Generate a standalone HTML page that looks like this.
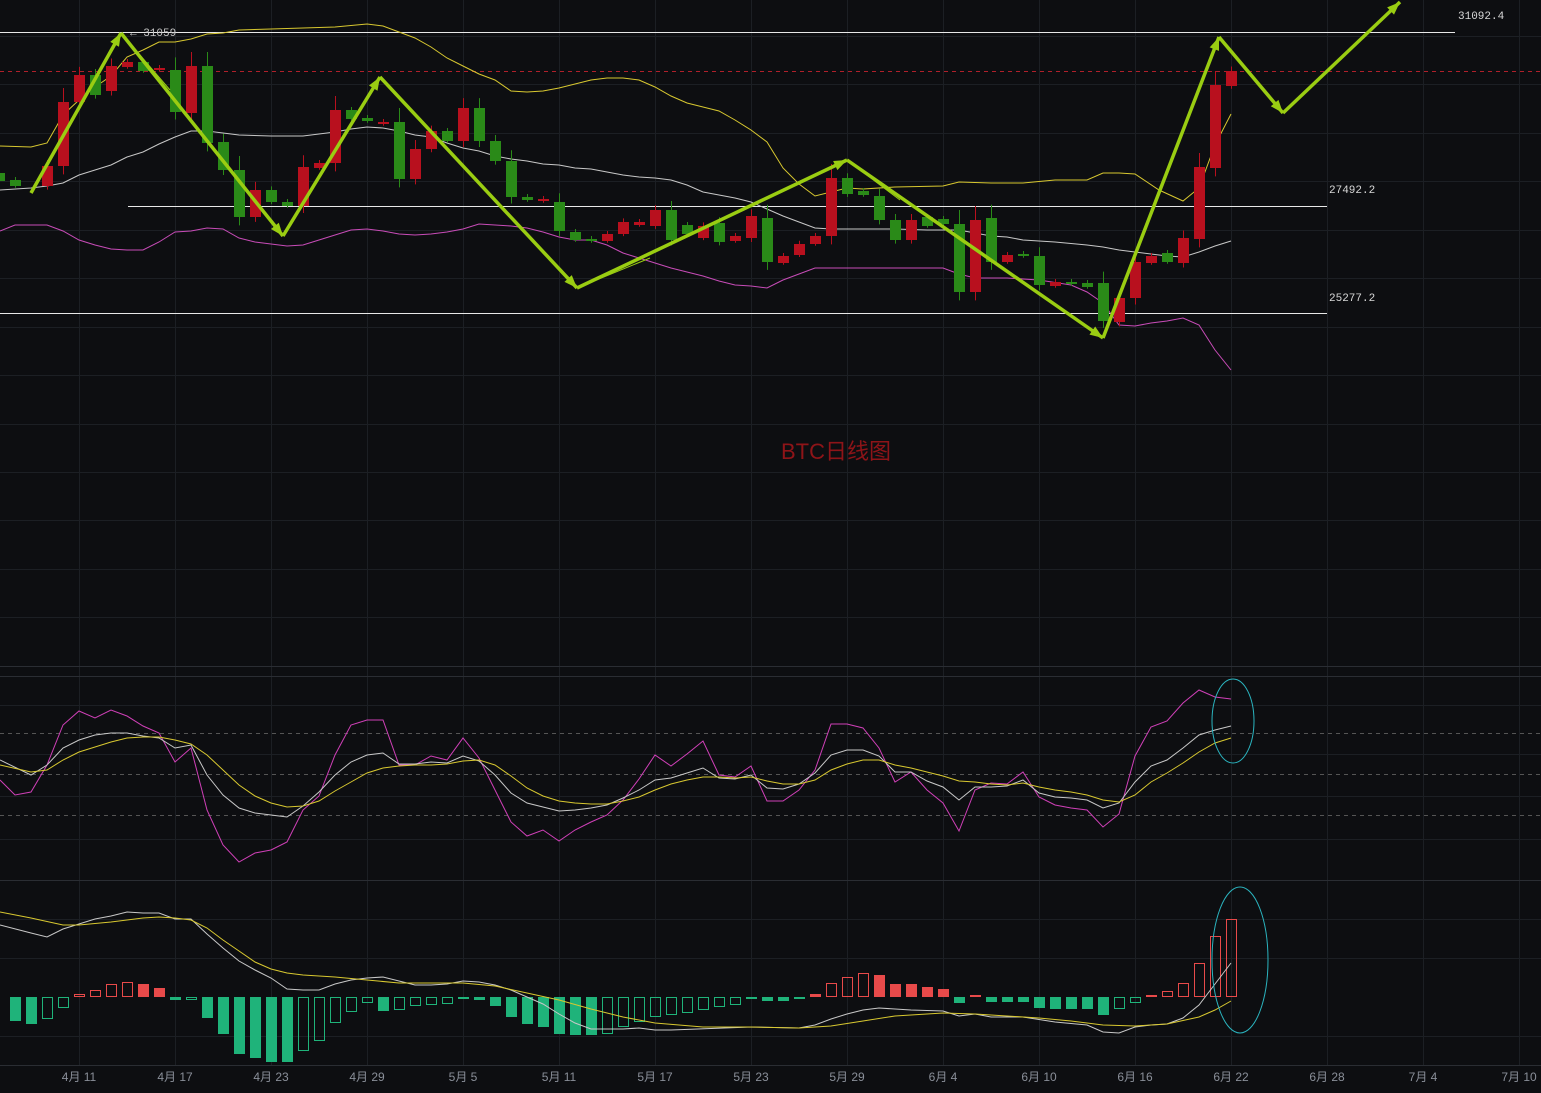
<!DOCTYPE html>
<html><head><meta charset="utf-8"><style>
html,body{margin:0;padding:0;background:#0d0e11;width:1541px;height:1093px;overflow:hidden}
svg{display:block}
.lbl{font-family:"Liberation Mono",monospace;font-size:11px;fill:#d8d8d8}
.ax{font-family:"Liberation Sans","Noto Sans CJK SC",sans-serif;font-size:12px;fill:#8a8f99}
</style></head><body>
<svg id="s" width="1541" height="1093" viewBox="0 0 1541 1093" xmlns="http://www.w3.org/2000/svg">
<rect width="1541" height="1093" fill="#0d0e11"/>
<g id="grid" stroke="#1c1f24" stroke-width="1"></g>
<line x1="0" y1="666.5" x2="1541" y2="666.5" stroke="#2a2d33"/>
<line x1="0" y1="676.5" x2="1541" y2="676.5" stroke="#2a2d33"/>
<line x1="0" y1="880.5" x2="1541" y2="880.5" stroke="#2a2d33"/>
<line x1="0" y1="1065.5" x2="1541" y2="1065.5" stroke="#2a2d33"/>
<!-- horizontal levels -->
<line x1="0" y1="32.5" x2="1455" y2="32.5" stroke="#e8e8e8"/>
<line x1="128" y1="206.5" x2="1327" y2="206.5" stroke="#e8e8e8"/>
<line x1="0" y1="313.5" x2="1327" y2="313.5" stroke="#e8e8e8"/>
<line x1="0" y1="71.5" x2="1541" y2="71.5" stroke="#b0202a" stroke-dasharray="4,4"/>
<text class="lbl" x="1458" y="19">31092.4</text>
<text class="lbl" x="1329" y="193">27492.2</text>
<text class="lbl" x="1329" y="301">25277.2</text>
<text class="lbl" x="130" y="36" style="fill:#c8c8c8">← 31059</text>
<!-- bollinger -->
<polyline fill="none" stroke="#d8c830" stroke-width="1" points="0,146 31,147 47,143 63,115 79,100 95,87 111,76 127,57 143,50 159,42 175,42 191,39 207,34 223,33 239,30 271,29 303,28 335,27 367,24 383,26 399,32 415,38 431,47 447,58 463,66 479,74 495,80 511,91 527,92 543,91 559,88 575,84 591,80 607,78 623,78 639,80 655,87 671,96 687,103 703,107 719,111 735,120 751,130 767,142 783,168 799,184 815,196 831,192 847,188 863,189 895,187 943,186 959,182 991,183 1023,183 1055,180 1087,180 1103,173 1119,173 1135,174 1159,190 1183,201 1199,188 1215,145 1231,114"/>
<polyline fill="none" stroke="#c8c8c8" stroke-width="1" points="0,190 31,188 47,186 63,183 79,175 95,170 111,165 127,157 143,152 159,144 175,137 191,131 207,131 223,133 239,135 271,136 303,136 335,132 351,129 367,127 383,128 399,131 415,135 431,137 447,143 463,148 479,151 495,156 511,159 527,161 543,164 559,165 575,168 591,169 607,172 623,175 639,177 655,178 671,180 687,185 703,192 719,195 735,198 751,202 767,209 783,216 799,222 815,228 831,229 863,229 895,229 927,230 959,230 975,233 991,236 1007,237 1023,240 1055,242 1087,245 1103,247 1119,250 1135,252 1151,254 1167,256 1183,257 1199,252 1215,246 1231,241"/>
<polyline fill="none" stroke="#c84cb8" stroke-width="1" points="0,231 15,225 31,225 47,225 63,231 79,240 95,245 111,249 127,250 143,250 159,242 175,232 191,231 207,228 223,229 239,238 255,242 271,244 287,246 303,245 319,240 335,235 351,230 367,229 383,231 399,234 415,235 431,234 447,232 463,229 479,224 495,225 511,226 527,228 543,232 559,237 575,240 591,240 607,245 623,253 639,258 655,263 671,268 687,272 703,276 719,281 735,285 751,286 767,288 783,280 799,274 815,268 831,268 895,268 943,268 959,274 975,278 1007,278 1039,280 1071,285 1087,292 1103,303 1119,325 1135,326 1151,323 1167,321 1183,318 1199,325 1215,350 1231,370"/>
<g id="candles"></g>
<g id="arrows"></g>
<text x="781" y="459" font-family="'Liberation Sans','Noto Sans CJK SC',sans-serif" font-size="22" fill="#8e1418">BTC日线图</text>
<!-- RSI -->
<line x1="0" y1="733.5" x2="1541" y2="733.5" stroke="#555" stroke-dasharray="4,4"/>
<line x1="0" y1="774.5" x2="1541" y2="774.5" stroke="#555" stroke-dasharray="4,4"/>
<line x1="0" y1="815.5" x2="1541" y2="815.5" stroke="#555" stroke-dasharray="4,4"/>
<polyline fill="none" stroke="#d040b8" stroke-width="1" points="0,780 15,795 31,792 47,765 63,725 79,711 95,718 111,710 127,716 143,726 159,733 175,762 191,748 207,810 223,845 239,862 255,853 271,850 287,842 303,810 319,796 335,755 351,725 367,720 383,720 399,765 415,765 431,756 447,760 463,738 479,758 495,790 511,822 527,836 543,830 559,841 575,830 591,822 607,815 623,800 639,779 655,755 671,766 687,754 703,741 719,775 735,777 751,766 767,801 783,801 799,790 815,770 831,724 847,724 863,728 879,748 895,782 911,772 927,790 943,803 959,831 975,790 991,783 1007,784 1023,772 1039,797 1055,805 1071,808 1087,810 1103,827 1119,814 1135,756 1151,727 1167,721 1183,703 1199,690 1215,697 1231,699"/>
<polyline fill="none" stroke="#c8c8c8" stroke-width="1" points="0,760 31,775 47,765 63,748 79,740 95,735 111,733 127,733 143,736 159,738 175,748 191,745 207,775 223,795 239,808 255,813 271,815 287,817 303,806 319,792 335,775 351,762 367,755 383,753 399,764 415,764 431,762 447,763 463,756 479,761 495,775 511,793 527,803 543,807 559,811 575,810 591,808 607,805 623,798 639,790 655,780 671,778 687,773 703,768 719,778 735,779 751,775 767,788 783,789 799,784 815,773 831,755 847,750 863,750 879,756 895,772 911,772 927,781 943,787 959,800 975,787 991,787 1007,786 1023,780 1039,793 1055,797 1071,798 1087,800 1103,808 1119,803 1135,782 1151,766 1167,760 1183,748 1199,735 1215,730 1231,726"/>
<polyline fill="none" stroke="#d8c830" stroke-width="1" points="0,765 31,772 47,770 63,760 79,752 95,747 111,742 127,738 143,737 159,737 175,740 191,744 207,755 223,770 239,785 255,796 271,803 287,807 303,806 319,801 335,791 351,782 367,773 383,768 399,766 415,765 431,765 447,764 463,761 479,760 495,765 511,776 527,788 543,796 559,801 575,803 591,804 607,804 623,801 639,797 655,790 671,784 687,780 703,777 719,777 735,778 751,777 767,781 783,784 799,784 815,780 831,770 847,764 863,760 879,760 895,765 911,768 927,772 943,776 959,781 975,782 991,784 1007,785 1023,783 1039,787 1055,790 1071,792 1087,795 1103,800 1119,802 1135,795 1151,782 1167,773 1183,763 1199,752 1215,743 1231,738"/>
<ellipse cx="1233" cy="721" rx="21" ry="42" fill="none" stroke="#2bb5c0" stroke-width="1"/>
<!-- MACD -->
<g id="hist"></g>
<polyline fill="none" stroke="#c8c8c8" stroke-width="1" points="0,925 31,933 47,937 63,929 79,924 95,919 111,916 127,912 143,913 159,913 175,919 191,919 207,934 223,948 239,961 255,970 271,978 287,989 303,990 319,990 335,984 351,980 367,978 383,977 399,981 415,985 431,985 447,984 463,981 479,982 495,985 511,990 527,997 543,1004 559,1014 575,1023 591,1029 607,1029 623,1029 639,1028 655,1030 671,1030 751,1027 799,1028 815,1025 831,1019 847,1014 863,1010 879,1008 911,1010 943,1011 959,1016 975,1014 991,1017 1023,1017 1055,1022 1087,1025 1103,1032 1119,1033 1135,1027 1151,1025 1167,1024 1183,1018 1199,1005 1215,984 1231,963"/>
<polyline fill="none" stroke="#d8c830" stroke-width="1" points="0,912 31,918 63,925 79,925 111,922 143,918 159,917 175,918 191,920 207,928 223,940 239,951 255,962 271,969 287,973 303,975 335,977 367,980 399,983 431,983 463,983 495,986 527,993 559,1000 591,1009 623,1017 655,1023 703,1027 751,1027 799,1028 831,1026 863,1021 895,1016 943,1013 975,1014 1007,1016 1039,1018 1071,1021 1103,1025 1135,1026 1167,1024 1199,1017 1215,1010 1231,1001"/>
<ellipse cx="1240" cy="960" rx="28" ry="73" fill="none" stroke="#2bb5c0" stroke-width="1"/>
<!-- axis -->
<g class="ax" text-anchor="middle">
<text x="79" y="1081">4月 11</text><text x="175" y="1081">4月 17</text><text x="271" y="1081">4月 23</text><text x="367" y="1081">4月 29</text><text x="463" y="1081">5月 5</text><text x="559" y="1081">5月 11</text><text x="655" y="1081">5月 17</text><text x="751" y="1081">5月 23</text><text x="847" y="1081">5月 29</text><text x="943" y="1081">6月 4</text><text x="1039" y="1081">6月 10</text><text x="1135" y="1081">6月 16</text><text x="1231" y="1081">6月 22</text><text x="1327" y="1081">6月 28</text><text x="1423" y="1081">7月 4</text><text x="1519" y="1081">7月 10</text>
</g>
</svg>
<script>
var NS="http://www.w3.org/2000/svg";
function el(p,t,a){var e=document.createElementNS(NS,t);for(var k in a)e.setAttribute(k,a[k]);p.appendChild(e);return e;}
var g=document.getElementById('grid');
for(var x=-17;x<1541;x+=96)el(g,'line',{x1:x+.5,y1:0,x2:x+.5,y2:1065});
[36,84,133,181,230,278,327,375,424,472,520,569,617,705,754,796,839,919,958,1036].forEach(function(y){el(g,'line',{x1:0,y1:y+.5,x2:1541,y2:y+.5});});
var R='#b8101e',G='#2a8a18';
var C=[[-1,173,181,'g'],[15,180,186,'g'],[47,166,186,'r'],[63,102,166,'r'],[79,75,102,'r'],[95,75,95,'g'],[111,66,91,'r'],[127,62,67,'r'],[143,62,71,'g'],[159,68,70,'r'],[175,70,112,'g'],[191,66,113,'r'],[207,66,143,'g'],[223,142,170,'g'],[239,170,217,'g'],[255,190,217,'r'],[271,190,202,'g'],[287,202,206,'g'],[303,167,206,'r'],[319,163,168,'r'],[335,110,163,'r'],[351,110,119,'g'],[367,118,121,'g'],[383,122,124,'r'],[399,122,179,'g'],[415,149,179,'r'],[431,131,149,'r'],[447,131,141,'g'],[463,108,141,'r'],[479,108,141,'g'],[495,141,161,'g'],[511,161,197,'g'],[527,197,200,'g'],[543,199,201,'r'],[559,202,231,'g'],[575,232,240,'g'],[591,239,241,'g'],[607,234,241,'r'],[623,222,234,'r'],[639,222,225,'r'],[655,210,226,'r'],[671,210,240,'g'],[687,225,234,'g'],[703,226,238,'r'],[719,223,242,'g'],[735,236,241,'r'],[751,216,238,'r'],[767,218,262,'g'],[783,256,263,'r'],[799,244,255,'r'],[815,236,244,'r'],[831,178,236,'r'],[847,178,194,'g'],[863,191,195,'g'],[879,196,220,'g'],[895,220,240,'g'],[911,220,240,'r'],[927,217,226,'g'],[943,219,224,'g'],[959,224,292,'g'],[975,220,292,'r'],[991,218,262,'g'],[1007,255,262,'r'],[1023,254,256,'g'],[1039,256,285,'g'],[1055,282,286,'r'],[1071,282,284,'g'],[1087,283,287,'g'],[1103,283,321,'g'],[1119,298,322,'r'],[1135,262,298,'r'],[1151,256,263,'r'],[1167,253,262,'g'],[1183,238,263,'r'],[1199,167,239,'r'],[1215,85,168,'r'],[1231,71,86,'r']];
var cg=document.getElementById('candles');
C.forEach(function(c){var col=c[3]=='r'?R:G;var h=c[2]-c[1];var wt=Math.max(3,Math.min(14,h*0.3));
el(cg,'line',{x1:c[0]+.5,y1:c[1]-wt,x2:c[0]+.5,y2:c[2]+wt*0.6,stroke:col,'stroke-width':1});
el(cg,'rect',{x:c[0]-5,y:c[1],width:11,height:Math.max(2,h),fill:col});});
var ag=document.getElementById('arrows');var A='#9acd12';
function arrow(x1,y1,x2,y2,thin){
 el(ag,'line',{x1:x1,y1:y1,x2:x2,y2:y2,stroke:A,'stroke-width':thin?1:3.5});
 if(thin)return;
 var dx=x2-x1,dy=y2-y1,L=Math.sqrt(dx*dx+dy*dy),ux=dx/L,uy=dy/L,s=13,w=5;
 var bx=x2-ux*s,by=y2-uy*s;
 el(ag,'polygon',{points:x2+','+y2+' '+(bx-uy*w)+','+(by+ux*w)+' '+(bx+uy*w)+','+(by-ux*w),fill:A});}
arrow(31,193,121,33);arrow(121,33,283,236);arrow(283,236,380,77);arrow(380,77,577,288);arrow(577,288,847,160);arrow(847,160,1103,338);arrow(1103,338,1219,37);arrow(1219,37,1283,113);arrow(1283,113,1400,2);
arrow(121,33,170,90,1);arrow(380,77,430,130,1);arrow(847,160,900,200,1);arrow(1219,37,1250,72,1);arrow(577,288,650,258,1);
var H=[[15,1021,'f'],[31,1024,'f'],[47,1019,'h'],[63,1008,'h'],[79,994,'h'],[95,990,'h'],[111,984,'h'],[127,982,'h'],[143,984,'f'],[159,988,'f'],[175,1000,'f'],[191,1000,'h'],[207,1018,'f'],[223,1034,'f'],[239,1054,'f'],[255,1058,'f'],[271,1062,'f'],[287,1062,'f'],[303,1051,'h'],[319,1041,'h'],[335,1023,'h'],[351,1012,'h'],[367,1003,'h'],[383,1011,'f'],[399,1010,'h'],[415,1006,'h'],[431,1005,'h'],[447,1004,'h'],[463,998,'f'],[479,1000,'f'],[495,1006,'f'],[511,1017,'f'],[527,1024,'f'],[543,1027,'f'],[559,1034,'f'],[575,1035,'f'],[591,1035,'f'],[607,1034,'h'],[623,1027,'h'],[639,1022,'h'],[655,1017,'h'],[671,1015,'h'],[687,1013,'h'],[703,1010,'h'],[719,1007,'h'],[735,1005,'h'],[751,999,'f'],[767,1001,'f'],[783,1001,'f'],[799,999,'h'],[815,994,'f'],[831,983,'h'],[847,977,'h'],[863,973,'h'],[879,975,'f'],[895,984,'f'],[911,984,'f'],[927,987,'f'],[943,989,'f'],[959,1003,'f'],[975,995,'f'],[991,1002,'f'],[1007,1002,'f'],[1023,1002,'f'],[1039,1008,'f'],[1055,1009,'f'],[1071,1009,'f'],[1087,1009,'f'],[1103,1015,'f'],[1119,1009,'h'],[1135,1003,'h'],[1151,995,'h'],[1167,991,'h'],[1183,983,'h'],[1199,963,'h'],[1215,936,'h'],[1231,919,'h']];
var hg=document.getElementById('hist');
H.forEach(function(h){var y0=997,up=h[1]<y0;var col=up?'#e84a4a':'#1fb37a';var top=Math.min(h[1],y0),ht=Math.max(2,Math.abs(h[1]-y0));
if(h[2]=='f')el(hg,'rect',{x:h[0]-5,y:top,width:11,height:ht,fill:col});
else el(hg,'rect',{x:h[0]-4.5,y:top+.5,width:10,height:Math.max(1,ht-1),fill:'none',stroke:col,'stroke-width':1});});
</script>
</body></html>
